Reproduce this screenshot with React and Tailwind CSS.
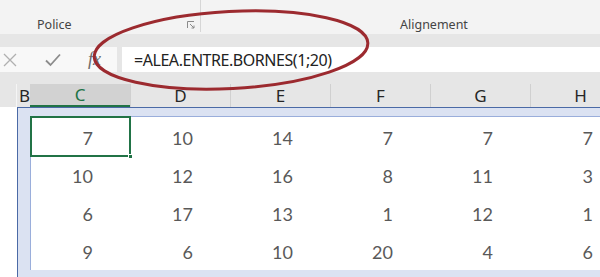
import React from "react";

const cols = ["C", "D", "E", "F", "G", "H"];
const rows = [
  [7, 10, 14, 7, 7, 7],
  [10, 12, 16, 8, 11, 3],
  [6, 17, 13, 1, 12, 1],
  [9, 6, 10, 20, 4, 6],
];

export default function App() {
  return (
    <div className="relative w-[600px] h-[277px] overflow-hidden bg-white font-['Noto_Sans',sans-serif]">
      {/* Ribbon */}
      <div className="flex h-[34px] bg-[#f3f3f3]">
        <div className="relative w-[200px] shrink-0">
          <span className="absolute left-[37px] top-[17px] text-[12.5px] leading-[16px] text-[#444]">Police</span>
          <svg className="absolute left-[187px] top-[21px]" width="8" height="8" viewBox="0 0 8 8">
            <path d="M0.5 7V0.5H7" fill="none" stroke="#8a8a8a" strokeWidth="1" />
            <path d="M3 3L7 7M7 4.5V7H4.5" fill="none" stroke="#8a8a8a" strokeWidth="1" />
          </svg>
        </div>
        <div className="w-px h-[32px] bg-[#d6d6d6] shrink-0" />
        <div className="relative flex-1">
          <span className="absolute left-[199px] top-[17px] text-[12.5px] leading-[16px] text-[#444]">Alignement</span>
        </div>
      </div>
      <div className="h-[13px] bg-[#e6e6e6]" />

      {/* Formula bar */}
      <div className="flex h-[25px] bg-[#e6e6e6]">
        <div className="relative w-[117px] shrink-0 bg-[#f8f8f8]">
          <svg className="absolute left-[3px] top-[6px]" width="14" height="14" viewBox="0 0 14 14">
            <path d="M1 1L13 13M13 1L1 13" stroke="#b0b0b0" strokeWidth="1.3" fill="none" />
          </svg>
          <svg className="absolute left-[45px] top-[6px]" width="16" height="14" viewBox="0 0 16 14">
            <path d="M1 7.5L5.5 12L15 1.5" stroke="#8c8c8c" strokeWidth="1.8" fill="none" />
          </svg>
          <span className="absolute left-[88px] top-[1px] font-['Liberation_Serif',serif] italic text-[18px] leading-[22px] text-[#6b6b6b]">fx</span>
        </div>
        <div className="w-[5px] shrink-0" />
        <div className="flex-1 bg-white flex items-center pl-[12px] text-[16px] leading-[20px] tracking-[-0.45px] text-[#222] pt-[1px]">
          =ALEA.ENTRE.BORNES(1;20)
        </div>
      </div>
      <div className="h-[12px] bg-[#e6e6e6]" />

      {/* Column headers */}
      <div className="flex h-[23px] bg-[#e6e6e6] text-[17px] leading-[20px] text-[#262626]">
        <div className="w-[17px] shrink-0 border-r border-[#f5f5f5]" />
        <div className="w-[13px] shrink-0 flex items-center pl-[2px]">B</div>
        {cols.map((c, i) =>
          i === 0 ? (
            <div key={c} className="w-[100px] shrink-0 flex items-center justify-center bg-[#d2d2d2] border-b-2 border-[#217346] text-[#217346]">
              {c}
            </div>
          ) : (
            <div key={c} className="w-[100px] shrink-0 flex items-center justify-center border-l border-[#d0d0d0]">
              {c}
            </div>
          )
        )}
      </div>

      {/* Sheet body */}
      <div className="flex">
        <div className="w-[17px] shrink-0 h-[200px] bg-white" />
        <div className="flex-1 border-l border-t border-[#4b6aa6] bg-[#dbe2f2] pl-[12px] pt-[8px]">
          <div className="border-l border-t border-[#9aaedb] bg-white">
            {rows.map((r, ri) => (
              <div key={ri} className={`flex ${ri === 0 ? "h-[39px]" : "h-[38px]"}`}>
                {r.map((v, ci) => (
                  <div
                    key={ci}
                    className={`relative shrink-0 flex items-end justify-end pr-[37px] pb-[9px] font-['Lato',sans-serif] text-[18px] leading-[18px] text-[#595959] ${ci === 0 ? "w-[99px]" : "w-[100px]"}`}
                  >
                    {v}
                    {ri === 0 && ci === 0 && (
                      <div className="absolute left-[-1px] top-[-1px] w-[101px] h-[41px] border-2 border-[#217346]">
                        <div className="absolute right-[-4px] bottom-[-4px] w-[5px] h-[5px] bg-[#217346] border border-white" />
                      </div>
                    )}
                  </div>
                ))}
              </div>
            ))}
          </div>
        </div>
      </div>

      {/* Hand-drawn annotation ellipse */}
      <svg className="absolute left-0 top-0 pointer-events-none" width="600" height="277" viewBox="0 0 600 277">
        <ellipse cx="231" cy="50" rx="137" ry="38.5" transform="rotate(-3 231 50)" fill="none" stroke="#9c2a2f" strokeWidth="3" />
      </svg>
    </div>
  );
}
